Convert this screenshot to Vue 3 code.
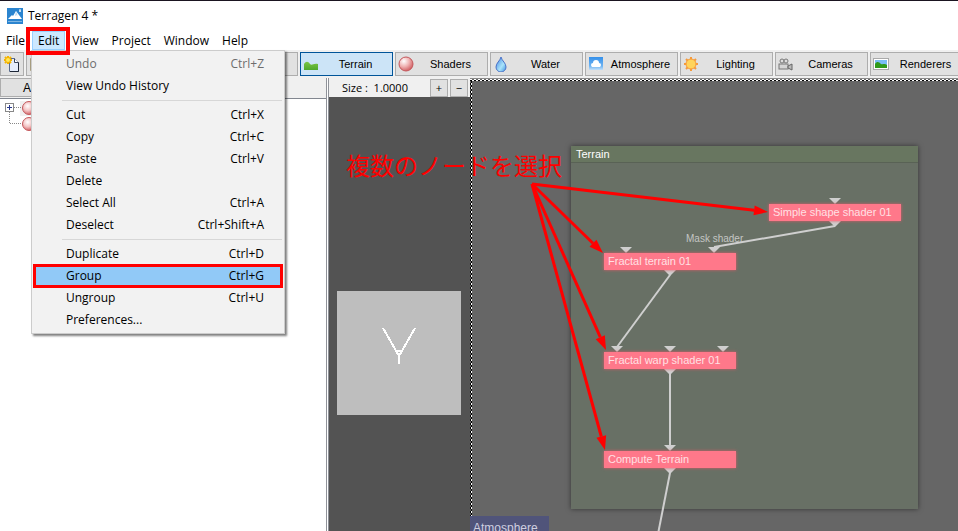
<script setup>
const menus = ['File', 'Edit', 'View', 'Project', 'Window', 'Help']

const editGroups = [
  [
    { label: 'Undo', keys: 'Ctrl+Z', disabled: true },
    { label: 'View Undo History', keys: '' },
  ],
  [
    { label: 'Cut', keys: 'Ctrl+X' },
    { label: 'Copy', keys: 'Ctrl+C' },
    { label: 'Paste', keys: 'Ctrl+V' },
    { label: 'Delete', keys: '' },
    { label: 'Select All', keys: 'Ctrl+A' },
    { label: 'Deselect', keys: 'Ctrl+Shift+A' },
  ],
  [
    { label: 'Duplicate', keys: 'Ctrl+D' },
    { label: 'Group', keys: 'Ctrl+G', marked: true },
    { label: 'Ungroup', keys: 'Ctrl+U' },
    { label: 'Preferences...', keys: '' },
  ],
]

const tabs = [
  { name: 'Terrain', icon: 'terrain' },
  { name: 'Shaders', icon: 'ball' },
  { name: 'Water', icon: 'water' },
  { name: 'Atmosphere', icon: 'cloud' },
  { name: 'Lighting', icon: 'sun' },
  { name: 'Cameras', icon: 'camera' },
  { name: 'Renderers', icon: 'render' },
]

// Node positions on the network canvas
const nodes = [
  { name: 'Simple shape shader 01', x: 299, y: 125 },
  { name: 'Fractal terrain 01', x: 134, y: 174 },
  { name: 'Fractal warp shader 01', x: 134, y: 273 },
  { name: 'Compute Terrain', x: 134, y: 372 },
]

// Connectors: top centre of each downward triangle
const ports = [
  [365, 119], [365, 142], [156, 168], [244, 168], [200, 191],
  [147, 267], [200, 267], [253, 267], [200, 290], [200, 366], [200, 389],
]

const links = [
  [365, 147, 244, 168],
  [200, 196, 147, 268],
  [200, 295, 200, 367],
  [200, 394, 187, 460],
]

// Callout arrows in canvas coordinates, all from the same origin
const origin = [62, 105]
const arrows = [[298, 133], [133, 174], [136, 271], [135, 371]].map(([x, y]) => {
  const dx = x - origin[0]
  const dy = y - origin[1]
  const len = Math.hypot(dx, dy)
  const ux = dx / len
  const uy = dy / len
  const bx = x - ux * 14
  const by = y - uy * 14
  return {
    bx, by,
    head: `${x},${y} ${bx - uy * 5},${by + ux * 5} ${bx + uy * 5},${by - ux * 5}`,
  }
})
</script>

<template>
  <div class="app">
    <header class="titlebar">
      <svg class="logo" viewBox="0 0 16 16" aria-hidden="true">
        <rect width="16" height="16" fill="#2b84cf" />
        <path d="M1 11 L5 7 L6 8 L9 3 L12 7 L15 11 Z" fill="#fff" />
        <path d="M9 3 L8 8 L10 7 L11 9 Z" fill="#b9d8f1" />
        <rect x="1" y="13" width="14" height="1" fill="#7fb5e2" />
        <path d="M13 1 V4 M12 3 H14" stroke="#fff" fill="none" />
      </svg>
      <span>Terragen 4 *</span>
    </header>

    <nav class="menubar">
      <div v-for="m in menus" :key="m" class="menu" :class="{ open: m === 'Edit' }">
        <button type="button" class="menu-title">{{ m }}</button>
        <template v-if="m === 'Edit'">
          <div class="dropdown">
            <div v-for="(g, i) in editGroups" :key="i" class="group">
              <button
                v-for="it in g"
                :key="it.label"
                type="button"
                class="item"
                :class="{ marked: it.marked }"
                :disabled="it.disabled"
              >
                <span>{{ it.label }}</span><span class="keys">{{ it.keys }}</span>
              </button>
            </div>
          </div>
          <div class="title-mark"></div>
        </template>
      </div>
    </nav>

    <div class="toolbar">
      <div class="tools">
        <button type="button" class="tool" aria-label="New">
          <svg viewBox="0 0 18 18" width="18" height="18" aria-hidden="true">
            <path d="M6.500 3.500 H11.500 L15.500 7.500 V16.500 H6.500 Z" fill="#e6eefc" stroke="#5a6c8c" />
            <path d="M15.500 7.500 V16.500 H7" fill="none" stroke="#1d2636" />
            <path d="M11.500 3.500 V7.500 H15.500" fill="#fff" stroke="#3a465c" />
            <path d="M5 1 V9 M1 5 H9 M2 2 L8 8 M8 2 L2 8" stroke="#f5b400" stroke-width="2" />
            <circle cx="5" cy="5" r="2" fill="#ffe75a" />
          </svg>
        </button>
        <button type="button" class="tool wide" aria-label="Open">
          <svg viewBox="0 0 18 18" width="18" height="18" aria-hidden="true">
            <path d="M1.500 3.500 H7 L9 5.500 H15.500 V15.500 H1.500 Z" fill="#d8cfae" stroke="#a79d80" />
          </svg>
        </button>
      </div>
      <button v-for="t in tabs" :key="t.name" type="button" class="tab" :class="{ active: t.name === 'Terrain' }">
        <svg class="tab-icon" viewBox="0 0 16 16" aria-hidden="true">
          <defs v-if="t.icon === 'ball'">
            <radialGradient id="ball" cx="0.35" cy="0.3" r="0.75">
              <stop offset="0" stop-color="#fff" />
              <stop offset="0.5" stop-color="#f0b4b4" />
              <stop offset="1" stop-color="#cf5a5e" />
            </radialGradient>
          </defs>
          <defs v-if="t.icon === 'water'">
            <linearGradient id="drop" x1="0" y1="0" x2="1" y2="1">
              <stop offset="0" stop-color="#3e7fe0" />
              <stop offset="0.6" stop-color="#a9e4fa" />
              <stop offset="1" stop-color="#3a8de0" />
            </linearGradient>
          </defs>
          <defs v-if="t.icon === 'cloud'">
            <linearGradient id="sky" x1="0" y1="0" x2="0" y2="1">
              <stop offset="0" stop-color="#3590ea" />
              <stop offset="0.7" stop-color="#6fb4f2" />
              <stop offset="1" stop-color="#c3e0fa" />
            </linearGradient>
          </defs>
          <defs v-if="t.icon === 'terrain'">
            <linearGradient id="hill" x1="0" y1="0" x2="0" y2="1">
              <stop offset="0" stop-color="#7cc644" />
              <stop offset="1" stop-color="#4fa82c" />
            </linearGradient>
          </defs>
          <path v-if="t.icon === 'terrain'" d="M1 8 C3 5 5 5 7 8 C9 10 10 7 15 8 V14 H1 Z" fill="url(#hill)" />
          <circle v-else-if="t.icon === 'ball'" cx="8" cy="8" r="7" fill="url(#ball)" stroke="#c4585c" />
          <path v-else-if="t.icon === 'water'" d="M8 1 C9 5 13 7 13 11 A5 5 0 0 1 3 11 C3 7 7 5 8 1 Z" fill="url(#drop)" stroke="#4a72c8" />
          <g v-else-if="t.icon === 'cloud'">
            <rect x="1" y="1" width="14" height="13" fill="url(#sky)" />
            <g fill="#fff">
              <circle cx="5" cy="9" r="2" />
              <circle cx="8" cy="7" r="3" />
              <circle cx="11" cy="9" r="2" />
              <rect x="4" y="8" width="8" height="3" />
            </g>
          </g>
          <g v-else-if="t.icon === 'sun'">
            <path d="M8 1 V15 M1 8 H15 M3 3 L13 13 M13 3 L3 13" stroke="#f59a3c" stroke-width="2" />
            <circle cx="8" cy="8" r="5" fill="#ffd45c" stroke="#f59a3c" />
          </g>
          <g v-else-if="t.icon === 'camera'">
            <circle cx="4" cy="5" r="2" fill="#ddd" stroke="#777" />
            <circle cx="8" cy="5" r="2" fill="#ddd" stroke="#777" />
            <rect x="1" y="8" width="9" height="5" fill="#d5d5d5" stroke="#777" />
            <path d="M10 10 L14 8 V14 L10 12 Z" fill="#bbb" stroke="#666" />
          </g>
          <g v-else>
            <rect x="0" y="2" width="16" height="12" fill="#aaa" />
            <rect x="1" y="3" width="14" height="10" fill="#fff" />
            <rect x="2" y="4" width="12" height="8" fill="#78bdf5" />
            <path d="M2 8 C4 5 6 6 8 8 C10 9 11 7 14 9 V12 H2 Z" fill="#2f9a1c" />
          </g>
        </svg>
        <span>{{ t.name }}</span>
      </button>
    </div>

    <main class="body">
      <section class="sidebar">
        <div class="side-head">
          <button type="button" class="add">A</button>
        </div>
        <svg class="tree" viewBox="0 0 60 40" width="60" height="40" aria-hidden="true">
          <defs>
            <radialGradient id="leaf" cx="0.4" cy="0.35" r="0.7">
              <stop offset="0" stop-color="#fff" />
              <stop offset="0.5" stop-color="#f3c4c4" />
              <stop offset="1" stop-color="#cf5a5e" />
            </radialGradient>
          </defs>
          <rect x="20" y="2" width="20" height="15" fill="#f0f0f0" />
          <path d="M14 8.500 H22 M9.500 13 V24.500 H22" stroke="#888" stroke-dasharray="1 1" fill="none" />
          <rect x="5.500" y="4.500" width="8" height="8" fill="#fff" stroke="#888" />
          <path d="M7 8.500 H12 M9.500 6 V11" stroke="#2a3a8c" />
          <circle cx="29" cy="9" r="6.500" fill="url(#leaf)" stroke="#c4585c" />
          <circle cx="29" cy="25" r="6.500" fill="url(#leaf)" stroke="#c4585c" />
        </svg>
      </section>

      <section class="preview">
        <div class="size-row">
          <span class="size">Size :&nbsp; 1.0000</span>
          <button type="button" class="step" aria-label="Increase size">+</button>
          <button type="button" class="step" aria-label="Decrease size">−</button>
        </div>
        <svg class="swatch" viewBox="0 0 124 124" aria-hidden="true">
          <rect width="124" height="124" fill="#bebebe" />
          <path d="M46 37 L62 65 L78 37 M58 59.500 H66 M62 64 V73" stroke="#fff" stroke-width="2" fill="none" shape-rendering="crispEdges" />
        </svg>
      </section>

      <section class="canvas">
        <div class="terrain-group">
          <h2>Terrain</h2>
        </div>
        <div class="atmo-group">Atmosphere</div>
        <div class="port-name">Mask shader</div>
        <svg class="wires" width="488" height="452" aria-hidden="true">
          <line v-for="(l, i) in links" :key="i" :x1="l[0]" :y1="l[1]" :x2="l[2]" :y2="l[3]" stroke="#cfcfcf" stroke-width="2" />
          <path v-for="(p, i) in ports" :key="'p' + i" :d="`M${p[0] - 6} ${p[1]} h12 l-6 6 Z`" fill="#cfcfcf" />
        </svg>
        <div v-for="n in nodes" :key="n.name" class="node" :style="{ left: n.x + 'px', top: n.y + 'px' }">{{ n.name }}</div>
        <svg class="wires" width="488" height="452" aria-hidden="true">
          <g v-for="(a, i) in arrows" :key="i" fill="#f00" stroke="#f00">
            <line :x1="origin[0]" :y1="origin[1]" :x2="a.bx" :y2="a.by" stroke-width="3" />
            <polygon :points="a.head" stroke="none" />
          </g>
        </svg>
      </section>
      <p class="note">複数のノードを選択</p>
    </main>
  </div>
</template>

<style>
body {
  margin: 0;
  background: #fff;
  overflow: hidden;
}
</style>

<style scoped>
.app {
  display: flex;
  flex-direction: column;
  height: 100vh;
  font: 12px/16px "Open Sans", "Noto Sans", sans-serif;
  color: #000;
  background: #fff;
}
button {
  font: inherit;
  color: inherit;
  padding: 0;
  margin: 0;
  border: 0;
  border-radius: 0;
  background: none;
}
.titlebar {
  display: flex;
  align-items: center;
  gap: 5px;
  box-sizing: border-box;
  height: 31px;
  padding-left: 7px;
  border-top: 1px solid #1a1420;
}
.logo {
  width: 16px;
  height: 16px;
}
.menubar {
  display: flex;
  gap: 1px;
  height: 19px;
}
.menu {
  position: relative;
}
.menu-title {
  box-sizing: border-box;
  height: 19px;
  padding: 0 5px;
  border: 1px solid transparent;
  line-height: 18px;
}
.open .menu-title {
  background: #cce8ff;
  border-color: #99d1ff;
}
.title-mark {
  position: absolute;
  z-index: 3;
  left: -6px;
  right: -5px;
  top: -4px;
  height: 20px;
  border: 4px solid #f00;
}
.dropdown {
  position: absolute;
  z-index: 2;
  top: 19px;
  left: -1px;
  width: 248px;
  padding: 2px;
  border: 1px solid #ccc;
  background: #f2f2f2;
  box-shadow: 2px 2px 2px rgba(0, 0, 0, 0.5);
}
.group + .group::before {
  content: "";
  display: block;
  height: 1px;
  margin: 3px 0 3px 28px;
  background: #d7d7d7;
}
.item {
  display: flex;
  justify-content: space-between;
  align-items: center;
  box-sizing: border-box;
  width: 100%;
  height: 22px;
  padding: 0 18px 0 32px;
}
.item:disabled {
  color: #6d6d6d;
}
.item.marked {
  background: #91c9f7;
  outline: 3px solid #f00;
  outline-offset: -2px;
}
.toolbar {
  display: flex;
  gap: 2px;
  padding: 2px 0;
  background: #f0f0f0;
  overflow: hidden;
  font: 11px/16px "Liberation Sans", Arial, sans-serif;
}
.tools {
  display: flex;
  flex: 0 0 298px;
  gap: 2px;
}
.tool,
.tab {
  box-sizing: border-box;
  height: 24px;
  border: 1px solid #adadad;
  background: #e1e1e1;
}
.tool {
  display: flex;
  align-items: center;
  justify-content: center;
  flex: 0 0 24px;
}
.tool.wide {
  flex: 1;
  justify-content: flex-start;
  padding-left: 2px;
}
.tab {
  display: flex;
  align-items: center;
  flex: 0 0 93px;
  padding-left: 2px;
}
.tab span {
  flex: 1;
  text-align: center;
}
.tab.active {
  background: #cce4f7;
  border-color: #005499;
}
.tab-icon {
  width: 16px;
  height: 16px;
}
.body {
  position: relative;
  display: flex;
  flex: 1;
  min-height: 0;
}
.sidebar {
  flex: 0 0 326px;
  border-right: 3px double #8f9299;
}
.side-head {
  box-sizing: border-box;
  height: 21px;
  background: #f0f0f0;
  border-bottom: 1px solid #828790;
}
.add {
  box-sizing: border-box;
  width: 54px;
  height: 19px;
  border: 1px solid #adadad;
  background: #e1e1e1;
  font: 12px/16px "Liberation Sans", Arial, sans-serif;
}
.tree {
  display: block;
}
.preview {
  flex: 0 0 141px;
  background: #535353;
}
.size-row {
  display: flex;
  align-items: center;
  gap: 2px;
  height: 19px;
  padding-right: 2px;
  background: #f0f0f0;
}
.size {
  flex: 1;
  padding-left: 13px;
  font-size: 11px;
}
.step {
  box-sizing: border-box;
  width: 18px;
  height: 18px;
  border: 1px solid #adadad;
  background: #e1e1e1;
  font-size: 11px;
  line-height: 14px;
}
.swatch {
  display: block;
  width: 124px;
  margin: 194px 0 0 8px;
}
.canvas {
  position: relative;
  flex: 1;
  overflow: hidden;
  border-top: 1px solid #8a8a8a;
  background:
    repeating-linear-gradient(90deg, #fff 0 2px, transparent 2px 4px) 0 0 / 100% 1px no-repeat,
    repeating-linear-gradient(90deg, #000 0 2px, #fff 2px 4px) 0 1px / 100% 1px no-repeat,
    repeating-linear-gradient(#000 0 2px, transparent 2px 4px) 0 0 / 1px 100% no-repeat,
    repeating-linear-gradient(#fff 0 2px, #000 2px 4px) 1px 0 / 1px 100% no-repeat,
    #666;
  font: 11px/16px "Liberation Sans", Arial, sans-serif;
}
.terrain-group {
  position: absolute;
  left: 101px;
  top: 67px;
  width: 347px;
  height: 363px;
  background: #687065;
  box-shadow: 0 0 5px rgba(0, 0, 0, 0.5);
}
.terrain-group h2 {
  margin: 0;
  padding-left: 5px;
  font-size: 11px;
  font-weight: 400;
  line-height: 16px;
  color: #fff;
  background: #687660;
  border-bottom: 1px solid #596255;
}
.atmo-group {
  position: absolute;
  left: 0;
  top: 437px;
  width: 76px;
  height: 20px;
  padding-left: 3px;
  font-size: 12px;
  line-height: 24px;
  color: #cfcfe0;
  background: #50547a;
}
.port-name {
  position: absolute;
  left: 216px;
  top: 152px;
  font-size: 10px;
  color: #c4c6c3;
}
.wires {
  position: absolute;
  left: 0;
  top: 0;
}
.node {
  position: absolute;
  box-sizing: border-box;
  width: 132px;
  height: 17px;
  padding-left: 4px;
  line-height: 17px;
  white-space: nowrap;
  color: #ffe0e4;
  background: #ff788a;
  box-shadow: 0 0 3px #e05a68;
}
.note {
  position: absolute;
  left: 346px;
  top: 73px;
  margin: 0;
  font: 400 24px/28px "Noto Sans CJK JP", sans-serif;
  color: #f00;
}
</style>
